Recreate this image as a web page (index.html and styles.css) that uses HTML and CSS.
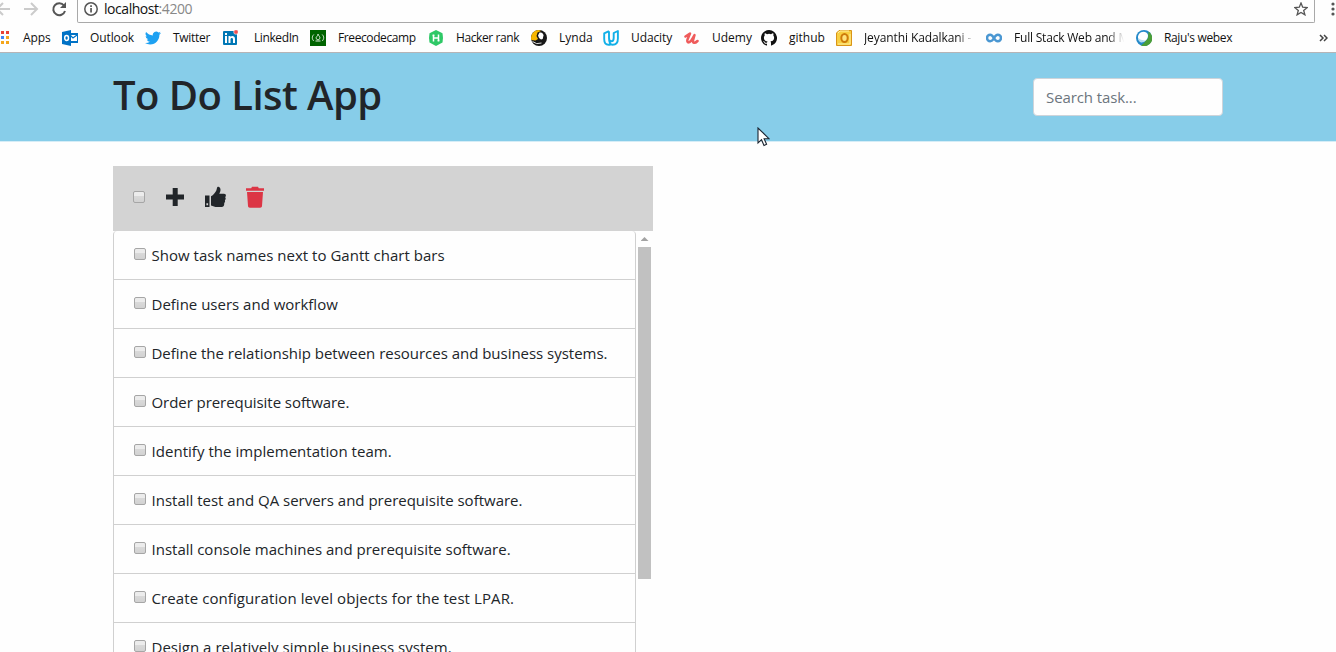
FILE: index.html
```html
<!DOCTYPE html>
<html lang="en">
<head>
<meta charset="utf-8">
<title>To Do List App</title>
<link rel="stylesheet" href="styles.css">
</head>
<body>
<div class="browser">
  <div class="toolbar">
    <svg class="nav" width="78" height="22" viewBox="0 0 78 22" fill="none" stroke-width="2">
      <path d="M10 9H-2M3 3l-6 6 6 6M24 9h13M31 3l6 6-6 6" stroke="#cbcbcb"/>
      <path d="M64 5.500A6 6 0 1 0 65 11" stroke="#555"/>
      <path d="M66 2v6h-6z" fill="#555"/>
    </svg>
    <div class="address">
      <svg width="14" height="14" viewBox="0 0 14 14"><circle cx="7" cy="7" r="6.200" fill="none" stroke="#555" stroke-width="1.500"/><path d="M6.200 6h1.700v4.500H6.200zM6.200 3.300h1.700V5H6.200z" fill="#555"/></svg>
      <span class="url">localhost<span class="port">:4200</span></span>
      <svg class="star" width="14" height="14" viewBox="0 0 14 14"><path d="M7 1l1.700 4.200 4.500.3-3.500 2.900 1.200 4.400L7 10.400l-3.900 2.400 1.200-4.400L.8 5.500l4.500-.3z" fill="none" stroke="#555" stroke-width="1.300"/></svg>
    </div>
    <svg class="menu" width="4" height="14" viewBox="0 0 4 14" fill="#555"><circle cx="2" cy="2" r="1.600"/><circle cx="2" cy="7" r="1.600"/><circle cx="2" cy="12" r="1.600"/></svg>
  </div>
  <div class="bookmarks">
    <div class="bm"><svg viewBox="0 0 16 16"><path d="M0 1h3v3H0zM6 1h3v3H6zM11 1h3v3h-3z" fill="#ea4335"/><path d="M6 6h3v3H6z" fill="#4285f4"/><path d="M11 6h3v3h-3zM6 11h3v3H6zM11 11h3v3h-3z" fill="#f4a61c"/></svg><span class="t-apps">Apps</span></div>
    <div class="bm"><svg viewBox="0 0 16 16"><path d="M7 3h9v10H7z" fill="#0072c6"/><path d="M8 5h7v6H8z" fill="#fff"/><path d="M8 5l3 3 4-3" fill="none" stroke="#0072c6" stroke-width="1.300"/><path d="M0 2l9-2v16l-9-2z" fill="#0072c6"/><ellipse cx="4.600" cy="8" rx="1.900" ry="2.500" fill="none" stroke="#fff" stroke-width="1.500"/></svg><span class="t-outlook">Outlook</span></div>
    <div class="bm"><svg viewBox="0 0 24 24"><path fill="#1da1f2" d="M23.950 4.570a10 10 0 0 1-2.820.78 4.960 4.960 0 0 0 2.160-2.730c-.95.56-2 .96-3.130 1.190a4.920 4.920 0 0 0-8.380 4.480C7.690 8.100 4.070 6.130 1.640 3.160a4.920 4.920 0 0 0 1.520 6.570 4.900 4.900 0 0 1-2.230-.62v.06a4.920 4.920 0 0 0 3.950 4.830 5 5 0 0 1-2.210.08 4.940 4.940 0 0 0 4.600 3.420A9.870 9.870 0 0 1 0 19.540a14 14 0 0 0 7.550 2.210c9.050 0 14-7.500 14-13.980l-.02-.64a10 10 0 0 0 2.420-2.560z"/></svg><span class="t-twitter">Twitter</span></div>
    <div class="bm wide"><svg viewBox="0 0 16 16"><rect x="1" y="1" width="14" height="14" rx="1" fill="#0077b5"/><path d="M3 6h2v7H3zM3 3h2v2H3zM6.500 6h2v1c1-1.500 4.500-1.500 4.500 2v4h-2V9.500c0-2-2.500-2-2.500 0V13h-2z" fill="#fff"/><circle cx="14" cy="2" r="2.300" fill="#f05050" stroke="#fff" stroke-width=".6"/></svg><span class="t-linkedin">LinkedIn</span></div>
    <div class="bm"><svg viewBox="0 0 16 16"><path d="M0 0h16v16H0z" fill="#006400"/><path d="M3.800 4.500c-2 2-2 4.500 0 6.500M12.200 4.500c2 2 2 4.500 0 6.500M5.500 11h5" fill="none" stroke="#d9ead9" stroke-width="1"/><path d="M8 4c.5 2 2 2.300 2 4L9 9.700H7L6 8C6 6.800 8 6 8 4z" fill="none" stroke="#d9ead9" stroke-width=".9"/></svg><span class="t-fcc">Freecodecamp</span></div>
    <div class="bm"><svg viewBox="0 0 16 16"><path d="M8 0l6.500 3.200Q15.500 8 14.500 12.500L8 16l-6.500-3.500Q.5 8 1.500 3.200z" fill="#2ec866"/><path d="M5.500 4.500v7M10.500 4.500v7M5.500 8h5M4.500 5.500h2M9.500 10.500h2" stroke="#fff" stroke-width="1.500"/></svg><span class="t-hacker">Hacker rank</span></div>
    <div class="bm"><svg viewBox="0 0 16 16"><circle cx="8" cy="8" r="8" fill="#171717"/><path d="M8 0A8 8 0 0 0 .3 10l4.200.5L7 9 5.500 6l1-3.500L10 1z" fill="#f8b700"/><path d="M8.500 2.500c2.500-.5 4 1 4 3l-.8 3.500-1.700.5L8 8 7 5.500z" fill="#fff"/><path d="M1.500 11.500q4 3.500 9 1.500" stroke="#ddd" fill="none"/></svg><span class="t-lynda">Lynda</span></div>
    <div class="bm"><svg viewBox="0 0 16 16" fill="none" stroke="#12b0e8" stroke-width="1.900" stroke-linejoin="round"><path d="M6 1.200L1.200 3.400V9c0 3.500 1.600 5.800 4.300 5.800.8 0 1.500-.2 2.100-.5M6 1.200V8c0 2 .9 3.300 2.400 3.300S10.700 10 10.700 8V3l4.200-2v7.500c0 3.800-2 6.200-5.300 6.200C6.500 14.700 6 12 6 8"/></svg><span class="t-udacity">Udacity</span></div>
    <div class="bm"><svg viewBox="0 0 16 16" fill="none" stroke="#ef5b5b" stroke-width="2.500" stroke-linecap="round" stroke-linejoin="round"><path d="M1.500 6.500l4.500-3-2.500 6c-1 4 2.500 4 5-1L10.500 5 9 10.500c-.5 3 2 3 4.500.5"/></svg><span class="t-udemy">Udemy</span></div>
    <div class="bm"><svg viewBox="0 0 16 16"><path d="M8 0C3.580 0 0 3.580 0 8c0 3.540 2.290 6.530 5.470 7.590.4.070.55-.17.55-.38v-1.490c-2.230.48-2.700-.94-2.700-.94-.36-.92-.89-1.170-.89-1.170-.73-.5.050-.49.050-.49.800.060 1.230.83 1.230.83.720 1.210 1.870.87 2.330.66.070-.52.280-.87.510-1.070-1.780-.2-3.640-.89-3.640-3.950 0-.87.310-1.590.820-2.150-.080-.2-.360-1.020.080-2.120 0 0 .67-.21 2.200.82a7.600 7.600 0 0 1 4 0c1.530-1.040 2.200-.82 2.200-.82.440 1.100.160 1.920.080 2.120.510.560.820 1.270.820 2.150 0 3.070-1.870 3.750-3.650 3.950.290.250.540.730.540 1.480v2.190c0 .21.150.46.550.38A8 8 0 0 0 8 0z" fill="#111"/></svg><span class="t-github">github</span></div>
    <div class="bm"><svg viewBox="0 0 16 16"><path d="M3 .5h12.500v15H.5V3z" fill="#f8cf42" stroke="#d99417"/><path d="M2 3l2-2h9M2 14h12V4" fill="none" stroke="#fff0a0"/><ellipse cx="8.500" cy="8" rx="3.200" ry="4" fill="#ffe27b" stroke="#ce7b0b" stroke-width="2"/></svg><span class="t-jey fade">Jeyanthi Kadalkani - G</span></div>
    <div class="bm"><svg viewBox="0 0 16 16" fill="none" stroke="#4a97d2" stroke-width="2.500"><path d="M8 8C6.500 5.500 5.500 4.800 4.200 4.800a3 3 0 0 0 0 6.400C6 11.200 7 9.800 8 8s2-3.200 3.800-3.200a3 3 0 0 1 0 6.400C10.500 11.200 9 10 8 8z"/></svg><span class="t-full fade">Full Stack Web and M</span></div>
    <div class="bm"><svg viewBox="0 0 16 16"><circle cx="8" cy="8" r="8" fill="#2489c9"/><path d="M12.500 1.400A8 8 0 0 1 5 15.500L8 13l4-5z" fill="#4a9d38"/><path d="M3 4C6 0 12 2 12 5.500S9 12.500 5.500 12C2 10.500 1 7 3 4z" fill="#fff"/><path d="M2 8q4 3 7 2-1 3-4 2.500-3-1.500-3-4.500z" fill="#b9def2"/></svg><span class="t-webex">Raju's webex</span></div>
    <svg class="more" width="9" height="8" viewBox="0 0 9 8" fill="none" stroke="#444" stroke-width="1.500"><path d="M1 1l3 3-3 3M5 1l3 3-3 3"/></svg>
  </div>
</div>
<header class="header">
  <h1>To Do List App</h1>
  <input class="search" type="text" placeholder="Search task...">
</header>
<main class="main">
  <div class="actions">
    <i class="box"></i>
    <svg class="plus" width="20" height="20" viewBox="0 0 20 20"><path d="M7.700 1h5v6.500H19v5h-6.300V19h-5v-6.500H1v-5h6.700z" fill="#212529"/></svg>
    <svg class="thumb-up" width="22" height="22" viewBox="0 0 22 22" fill="#212529"><path fill-rule="evenodd" d="M1 9.500h4.500V21H1zM2.400 17.300v2h1.700v-2z"/><path d="M7 10.300c2.500-1.300 4-3.300 5.200-5.500.6-1.300.6-3 1.200-3.800 1.500-1 3.100.6 3.100 2.700 0 1.800-.8 3-1.200 4.100H20c2 0 2.500 2 1.200 3.400.8 1.200.6 2.300-.3 3.100.4 1.100.1 2-.7 2.700.4 3.200-1.200 4-3.800 4h-3.200c-2.500 0-4-.9-6.200-1.600z"/></svg>
    <svg class="trash" width="20" height="22" viewBox="0 0 20 22" fill="#dc3545"><path d="M1 2.200h5.200L7 .8h6l.8 1.400H19v2.500H1zM2 6h16l-1 14c-.1 1-.8 1.700-1.800 1.700H4.800c-1 0-1.700-.7-1.800-1.700z"/></svg>
  </div>
  <div class="scroller">
    <ul class="list">
      <li><i class="box"></i><span class="l1">Show task names next to Gantt chart bars</span></li>
      <li><i class="box"></i><span class="l2">Define users and workflow</span></li>
      <li><i class="box"></i><span class="l3">Define the relationship between resources and business systems.</span></li>
      <li><i class="box"></i><span class="l4">Order prerequisite software.</span></li>
      <li><i class="box"></i><span class="l5">Identify the implementation team.</span></li>
      <li><i class="box"></i><span class="l6">Install test and QA servers and prerequisite software.</span></li>
      <li><i class="box"></i><span class="l7">Install console machines and prerequisite software.</span></li>
      <li><i class="box"></i><span class="l8">Create configuration level objects for the test LPAR.</span></li>
      <li><i class="box"></i><span class="l9">Design a relatively simple business system.</span></li>
    </ul>
    <div class="scrollbar"><i class="arrow"></i><i class="thumb"></i></div>
  </div>
</main>
<svg class="cursor" width="13" height="20" viewBox="0 0 13 20"><path d="M1 1v15l3.500-3.300 2.500 5.800 2.600-1.200-2.500-5.600H12z" fill="#fff" stroke="#1b2430" stroke-width="1.100"/></svg>
</body>
</html>
```
FILE: styles.css
```css
* { box-sizing: border-box; }
body {
  margin: 0;
  height: 652px;
  overflow: hidden;
  background: #fefefe;
  color: #212529;
  font-family: "Open Sans", "Noto Sans", sans-serif;
}
svg { display: block; flex: none; }
.browser { height: 53px; border-bottom: 1px solid #b6b4b6; }
.toolbar { display: flex; height: 23px; }
.nav { margin-right: -1px; }
.address {
  display: flex;
  width: 1238px;
  height: 23px;
  padding: 2px 6px 0;
  border: 1px solid #a9a9a9;
  border-top: 0;
  border-radius: 0 0 2px 2px;
}
.url { margin: -2px 0 0 6px; font-size: 14px; line-height: 18px; letter-spacing: -0.45px; color: #111; }
.port { color: #888; }
.star { margin-left: auto; }
.menu { margin: 2px 0 0 16px; }
.bookmarks {
  display: grid;
  grid-template-columns: 67px 83px 77px 88px 118px 103px 72px 81px 77px 75px 150px 150px 183px 9px;
  align-items: center;
  height: 29px;
  margin-left: -5px;
  padding-top: 1px;
}
.bm { display: flex; align-items: center; gap: 12px; font-size: 12px; line-height: 16px; color: #111; white-space: nowrap; }
.bm svg { width: 16px; height: 16px; }
.t-apps, .t-outlook, .t-udacity { letter-spacing: -0.1px; }
.t-twitter { letter-spacing: -0.3px; }
.t-linkedin, .t-fcc, .t-hacker { letter-spacing: -0.4px; }
.t-webex { letter-spacing: -0.35px; }
.t-jey { letter-spacing: -0.1px; }
.t-full { letter-spacing: -0.2px; }
.wide { gap: 16px; }
.fade {
  width: 110px;
  overflow: hidden;
  -webkit-mask-image: linear-gradient(to right, #000 85%, transparent);
  mask-image: linear-gradient(to right, #000 85%, transparent);
}
.header {
  display: flex;
  justify-content: space-between;
  height: 89px;
  padding: 25px 113px 0;
  background: #87cde9;
  border-bottom: 1px solid #d5edf7;
}
h1 { margin: -7px 0 0; font-size: 40px; line-height: 48px; font-weight: 600; letter-spacing: -0.55px; white-space: nowrap; }
.search {
  width: 190px;
  height: 38px;
  padding: 0 12px;
  border: 1px solid #ced4da;
  border-radius: 4px;
  background: #fefefe;
  font: 15px "Open Sans", "Noto Sans", sans-serif;
  letter-spacing: -0.1px;
}
.search::placeholder { color: #6c757d; opacity: 1; }
.main { width: 540px; margin: 24px 0 0 113px; }
.actions { display: flex; align-items: center; height: 65px; padding: 0 0 4px 20px; background: #d3d3d3; }
.box {
  flex: none;
  width: 12px;
  height: 12px;
  border: 1px solid #a6a6a6;
  border-radius: 2px;
  background: linear-gradient(#ececec 0 35%, #dadada 36%, #d2d2d2);
}
.plus { margin-left: 20px; }
.thumb-up { margin-left: 19px; }
.trash { margin-left: 19px; }
.scroller { display: flex; }
.list {
  width: 523px;
  margin: 0;
  padding: 0;
  border: solid #d0d0d0;
  border-width: 0 1px;
  border-radius: 4px 4px 0 0;
  list-style: none;
}
.list li {
  display: flex;
  height: 49px;
  padding: 12px 0 0 20px;
  border-bottom: 1px solid #d0d0d0;
  font-size: 15px;
  line-height: 24px;
  white-space: nowrap;
}
.list .box { margin: 5px 5.5px 0 0; }
.l1 { letter-spacing: 0.02px; }
.l3 { letter-spacing: -0.02px; }
.l4 { letter-spacing: -0.06px; }
.l5 { letter-spacing: 0.04px; }
.l8 { letter-spacing: 0.09px; }
.l9 { letter-spacing: 0.02px; }
.scrollbar { width: 13px; margin-left: 2px; }
.arrow { display: block; width: 8px; height: 4px; margin: 6px 0 6px 2.5px; background: #a3a3a3; clip-path: polygon(50% 0, 100% 100%, 0 100%); }
.thumb { display: block; height: 332px; background: #c1c1c1; }
.cursor { position: absolute; left: 757px; top: 127px; }
```
